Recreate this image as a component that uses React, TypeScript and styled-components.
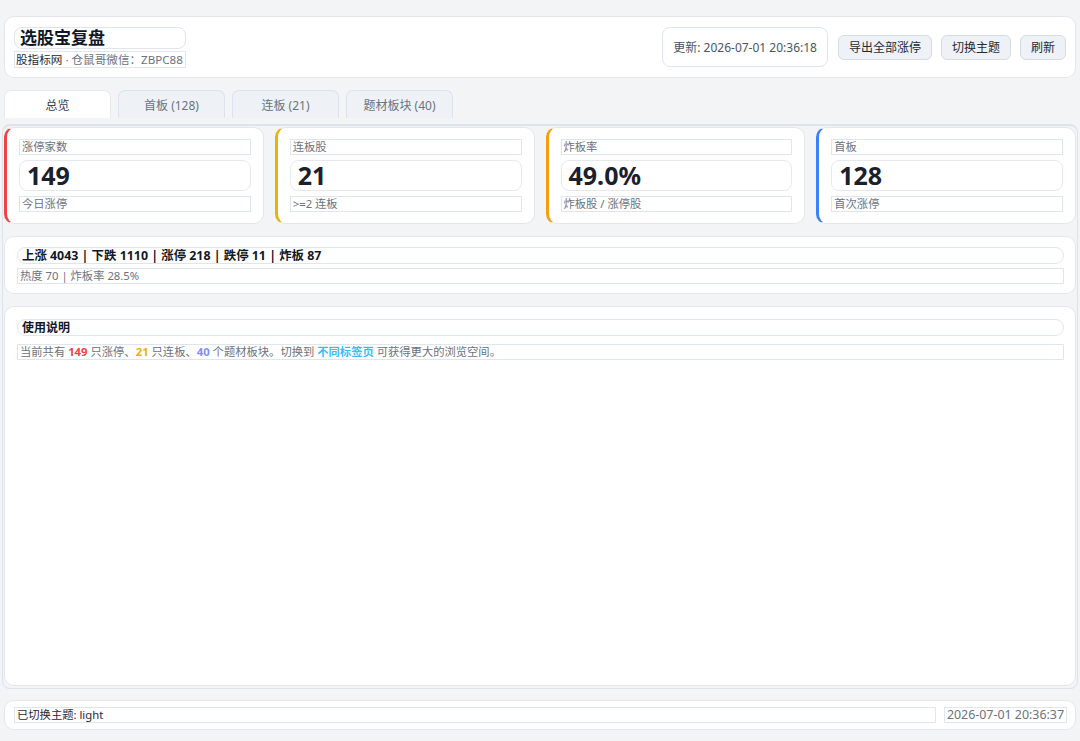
import React from "react";
import styled, { createGlobalStyle } from "styled-components";

const Global = createGlobalStyle`
  * { box-sizing: border-box; }
  html, body { margin: 0; padding: 0; height: 100%; background: #f3f4f6; }
  body { font-family: "Segoe UI", "Noto Sans", "Noto Sans CJK SC", sans-serif; color: #1f2937; }
  #root { height: 100%; }
`;

const Page = styled.div`
  height: 741px;
  padding: 16px 4px 11px;
  display: flex;
  flex-direction: column;
`;

const Header = styled.header`
  background: #fff;
  border: 1px solid #e3e7ec;
  border-radius: 10px;
  padding: 10px 9px 9px 9px;
  display: flex;
  align-items: flex-start;
  justify-content: space-between;
`;

const Brand = styled.div`
  display: inline-flex;
  flex-direction: column;
  gap: 2px;
`;

const Title = styled.h1`
  margin: 0;
  height: 22px;
  border: 1px solid #dfe5ec;
  border-radius: 8px;
  padding: 0 5px;
  font-size: 17px;
  line-height: 20px;
  font-weight: 700;
  color: #111827;
`;

const Sub = styled.div`
  height: 17px;
  border: 1px solid #dfe5ec;
  padding: 0 2px 0 1px;
  font-size: 11.6px;
  line-height: 15px;
  color: #6b7280;
  white-space: nowrap;
  b { font-weight: 400; color: #1f2937; }
`;

const Actions = styled.div`
  display: flex;
  align-items: center;
  gap: 9px;
`;

const TimeBox = styled.div`
  height: 40px;
  border: 1px solid #dfe5ec;
  border-radius: 8px;
  padding: 0 10px;
  display: flex;
  align-items: center;
  font-size: 12px;
  color: #4b5563;
  margin-right: 1px;
`;

const Button = styled.button`
  height: 25px;
  padding: 0 10px;
  background: #eef2f6;
  border: 1px solid #d5dce5;
  border-radius: 6px;
  font-family: inherit;
  font-size: 12px;
  color: #1f2937;
  cursor: pointer;
`;

const Tabs = styled.nav`
  display: flex;
  gap: 7px;
  margin-top: 12px;
`;

const Tab = styled.div<{ $active?: boolean }>`
  width: 107px;
  height: 28px;
  display: flex;
  align-items: center;
  justify-content: center;
  font-size: 12px;
  border: 1px solid ${(p) => (p.$active ? "#e6eaef" : "#dde3ea")};
  border-bottom: none;
  border-radius: 7px 7px 0 0;
  background: ${(p) => (p.$active ? "#ffffff" : "#eef2f6")};
  color: ${(p) => (p.$active ? "#374151" : "#6b7280")};
`;

const Content = styled.main`
  flex: 1;
  margin: 6px -2px 0;
  border: 1px solid #dde3ea;
  border-top-width: 2px;
  border-radius: 8px;
  padding: 1px 1px 2px;
  display: flex;
  flex-direction: column;
  gap: 12px;
`;

const StatGrid = styled.div`
  display: grid;
  grid-template-columns: repeat(4, 1fr);
  gap: 11px;
`;

const Card = styled.section`
  background: #fff;
  border: 1px solid #e3e7ec;
  border-radius: 10px;
`;

const StatCard = styled(Card)<{ $accent: string }>`
  border-left: 3px solid ${(p) => p.$accent};
  padding: 11px 12px;
  display: flex;
  flex-direction: column;
  gap: 5px;
`;

const BoxText = styled.div<{ $dark?: boolean; $size?: number }>`
  height: 16px;
  border: 1px solid #dfe5ec;
  padding: 0 2px;
  font-size: ${(p) => p.$size ?? 11.3}px;
  line-height: 14px;
  color: ${(p) => (p.$dark ? "#1f2937" : "#6b7280")};
  white-space: nowrap;
  overflow: hidden;
`;

const Value = styled.div`
  height: 31px;
  border: 1px solid #e5e9ef;
  border-radius: 8px;
  padding: 0 7px;
  font-size: 25px;
  font-weight: 700;
  line-height: 29px;
  color: #1a202c;
`;

const MarketCard = styled(Card)`
  padding: 10px 11px 9px 12px;
  display: flex;
  flex-direction: column;
  gap: 4px;
`;

const Pill = styled.div<{ $size: number }>`
  height: 17px;
  border: 1px solid #dfe5ec;
  border-radius: 999px;
  padding: 0 4px;
  font-size: ${(p) => p.$size}px;
  font-weight: 700;
  line-height: 15px;
  color: #111827;
`;

const UsageCard = styled(Card)`
  flex: 1;
  padding: 12px 11px 12px 12px;
  display: flex;
  flex-direction: column;
  gap: 8px;
`;

const Hl = styled.b<{ $c: string }>`
  color: ${(p) => p.$c};
  font-weight: 700;
`;

const Footer = styled(Card)`
  margin-top: 11px;
  height: 30px;
  padding: 6px 8px 0 9px;
  display: flex;
  gap: 8px;
`;

const Grow = styled(BoxText)`
  flex: 1;
`;

const stats = [
  { label: "涨停家数", value: "149", sub: "今日涨停", accent: "#ef4444" },
  { label: "连板股", value: "21", sub: ">=2 连板", accent: "#eab308" },
  { label: "炸板率", value: "49.0%", sub: "炸板股 / 涨停股", accent: "#f59e0b" },
  { label: "首板", value: "128", sub: "首次涨停", accent: "#3b82f6" },
];

const tabs = ["总览", "首板 (128)", "连板 (21)", "题材板块 (40)"];

export default function App() {
  return (
    <>
      <Global />
      <Page>
        <Header>
          <Brand>
            <Title>选股宝复盘</Title>
            <Sub>
              <b>股指标网</b> · 仓鼠哥微信：ZBPC88
            </Sub>
          </Brand>
          <Actions>
            <TimeBox>更新: 2026-07-01 20:36:18</TimeBox>
            <Button>导出全部涨停</Button>
            <Button>切换主题</Button>
            <Button>刷新</Button>
          </Actions>
        </Header>
        <Tabs>
          {tabs.map((t, i) => (
            <Tab key={t} $active={i === 0}>
              {t}
            </Tab>
          ))}
        </Tabs>
        <Content>
          <StatGrid>
            {stats.map((s) => (
              <StatCard key={s.label} $accent={s.accent}>
                <BoxText>{s.label}</BoxText>
                <Value>{s.value}</Value>
                <BoxText>{s.sub}</BoxText>
              </StatCard>
            ))}
          </StatGrid>
          <MarketCard>
            <Pill $size={12.4}>上涨 4043 | 下跌 1110 | 涨停 218 | 跌停 11 | 炸板 87</Pill>
            <BoxText>热度 70 | 炸板率 28.5%</BoxText>
          </MarketCard>
          <UsageCard>
            <Pill $size={12}>使用说明</Pill>
            <BoxText>
              当前共有 <Hl $c="#ef4444">149</Hl> 只涨停、<Hl $c="#eab308">21</Hl> 只连板、
              <Hl $c="#818cf8">40</Hl> 个题材板块。切换到 <Hl $c="#38bdf8">不同标签页</Hl> 可获得更大的浏览空间。
            </BoxText>
          </UsageCard>
        </Content>
        <Footer>
          <Grow $dark>已切换主题: light</Grow>
          <BoxText $size={12.4}>2026-07-01 20:36:37</BoxText>
        </Footer>
      </Page>
    </>
  );
}
